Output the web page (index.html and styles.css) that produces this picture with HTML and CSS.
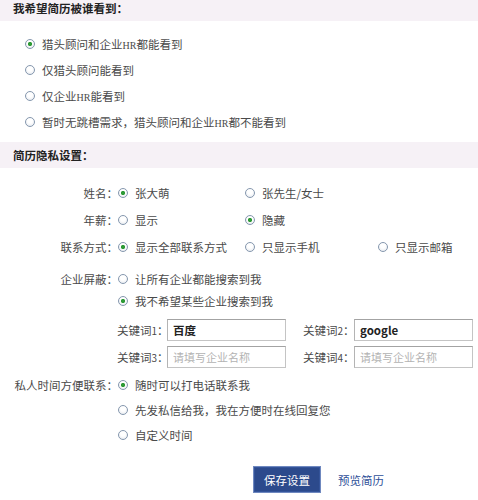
FILE: index.html
```html
<!DOCTYPE html>
<html lang="zh-CN">
<head>
<meta charset="utf-8">
<title>简历隐私设置</title>
<link rel="stylesheet" href="styles.css">
</head>
<body>
<div class="page">
  <div class="bar bar-first">我希望简历被谁看到：</div>
  <ul class="vis-list">
    <li class="opt"><input class="radio" type="radio" name="vis" checked><span>猎头顾问和企业<span class="latin">HR</span>都能看到</span></li>
    <li class="opt"><input class="radio" type="radio" name="vis"><span>仅猎头顾问能看到</span></li>
    <li class="opt"><input class="radio" type="radio" name="vis"><span>仅企业<span class="latin">HR</span>能看到</span></li>
    <li class="opt"><input class="radio" type="radio" name="vis"><span>暂时无跳槽需求，猎头顾问和企业<span class="latin">HR</span>都不能看到</span></li>
  </ul>

  <div class="bar">简历隐私设置：</div>
  <div class="form">
    <div class="group group-basic">
      <div class="row">
        <span class="lbl">姓名：</span>
        <div class="choices">
          <label class="choice"><input class="radio" type="radio" name="name" checked>张大萌</label>
          <label class="choice"><input class="radio" type="radio" name="name">张先生/女士</label>
        </div>
      </div>
      <div class="row">
        <span class="lbl">年薪：</span>
        <div class="choices">
          <label class="choice"><input class="radio" type="radio" name="salary">显示</label>
          <label class="choice"><input class="radio" type="radio" name="salary" checked>隐藏</label>
        </div>
      </div>
      <div class="row">
        <span class="lbl">联系方式：</span>
        <div class="choices">
          <label class="choice"><input class="radio" type="radio" name="contact" checked>显示全部联系方式</label>
          <label class="choice"><input class="radio" type="radio" name="contact">只显示手机</label>
          <label class="choice"><input class="radio" type="radio" name="contact">只显示邮箱</label>
        </div>
      </div>
    </div>

    <div class="group group-block">
      <div class="row">
        <span class="lbl">企业屏蔽：</span>
        <label class="choice"><input class="radio" type="radio" name="block">让所有企业都能搜索到我</label>
      </div>
      <div class="row">
        <span class="lbl"></span>
        <label class="choice"><input class="radio" type="radio" name="block" checked>我不希望某些企业搜索到我</label>
      </div>
    </div>

    <div class="kw-row">
      <span class="lbl"></span>
      <div class="kw-grid">
        <span class="kw-lbl">关键词<span class="num">1</span>：</span>
        <input class="kw-input filled" type="text" value="百度">
        <span class="kw-lbl kw-lbl-2">关键词<span class="num">2</span>：</span>
        <input class="kw-input filled" type="text" value="google">
        <span class="kw-lbl">关键词<span class="num">3</span>：</span>
        <input class="kw-input" type="text" placeholder="请填写企业名称">
        <span class="kw-lbl kw-lbl-2">关键词<span class="num">4</span>：</span>
        <input class="kw-input" type="text" placeholder="请填写企业名称">
      </div>
    </div>

    <div class="group group-time">
      <div class="row">
        <span class="lbl">私人时间方便联系：</span>
        <label class="choice"><input class="radio" type="radio" name="time" checked>随时可以打电话联系我</label>
      </div>
      <div class="row">
        <span class="lbl"></span>
        <label class="choice"><input class="radio" type="radio" name="time">先发私信给我，我在方便时在线回复您</label>
      </div>
      <div class="row">
        <span class="lbl"></span>
        <label class="choice"><input class="radio" type="radio" name="time">自定义时间</label>
      </div>
    </div>

    <div class="actions">
      <button class="btn" type="button">保存设置</button>
      <a class="link" href="#">预览简历</a>
    </div>
  </div>
</div>
</body>
</html>
```

FILE: styles.css
```css
* {
  box-sizing: border-box;
}

body {
  margin: 0;
  background: #fff;
  font-family: "Noto Sans CJK SC", "Noto Sans", sans-serif;
  font-size: 11.5px;
  color: #4a4a4a;
}

.page {
  width: 478px;
  margin-top: -5px;
}

.bar {
  height: 26px;
  line-height: 26px;
  padding-left: 13px;
  background: #f6f1f6;
  font-weight: bold;
  color: #222;
}

.latin {
  font-family: "Liberation Serif", serif;
  font-size: 10px;
}

.vis-list {
  list-style: none;
  margin: 0;
  padding: 10px 0 7px 25px;
}

.opt {
  display: flex;
  align-items: center;
  height: 26px;
  white-space: nowrap;
}

.radio {
  -webkit-appearance: none;
  appearance: none;
  flex: none;
  width: 10px;
  height: 10px;
  margin: 0 7px 0 0;
  border: 1px solid #8597ae;
  border-radius: 50%;
  background: radial-gradient(circle at 50% 35%, #ffffff 35%, #e2e6ec 100%);
}

.radio:checked {
  background:
    radial-gradient(circle, #2e9a36 0 1.8px, transparent 2.4px),
    radial-gradient(circle at 50% 35%, #ffffff 35%, #e2e6ec 100%);
}

.form {
  display: flex;
  flex-direction: column;
  padding-top: 14px;
}

.group {
  display: flex;
  flex-direction: column;
}

.group-basic {
  gap: 5px;
}

.group-block {
  margin-top: 10px;
}

.group-time {
  margin-top: 6px;
  gap: 3px;
}

.row {
  display: flex;
  align-items: center;
  height: 22px;
}

.lbl {
  flex: none;
  width: 118px;
  text-align: right;
  white-space: nowrap;
}

.choices {
  display: grid;
  grid-template-columns: 127px 133px auto;
}

.choice {
  display: flex;
  align-items: center;
  white-space: nowrap;
}

.kw-row {
  display: flex;
  margin-top: 7px;
}

.kw-grid {
  display: grid;
  grid-template-columns: 50px 119px 68px 119px;
  row-gap: 5px;
  align-items: center;
  margin-left: -1px;
}

.kw-lbl {
  white-space: nowrap;
}

.kw-lbl-2 {
  padding-left: 17px;
}

.num {
  font-size: 10px;
}

.kw-input {
  height: 22px;
  width: 119px;
  margin: 0;
  padding: 0 5px;
  border: 1px solid #c4c4c4;
  border-top-color: #a3a3a3;
  border-left-color: #b4b4b4;
  font-family: "Noto Sans CJK SC", "Noto Sans", sans-serif;
  font-size: 11.5px;
  color: #222;
  outline: none;
}

.kw-input.filled {
  font-weight: bold;
}

.kw-input::placeholder {
  color: #b3b3b3;
  font-size: 11px;
}

.actions {
  display: flex;
  align-items: center;
  margin-top: 20px;
  padding-left: 253px;
}

.btn {
  width: 68px;
  height: 27px;
  padding: 0;
  border: 1px solid #6f88bf;
  background: #2c4a8c;
  color: #fff;
  font-family: "Noto Sans CJK SC", "Noto Sans", sans-serif;
  font-size: 11.5px;
  box-shadow: inset 0 0 0 1px #34549a;
}

.link {
  margin-left: 17px;
  color: #2e4f98;
  text-decoration: none;
}
```
